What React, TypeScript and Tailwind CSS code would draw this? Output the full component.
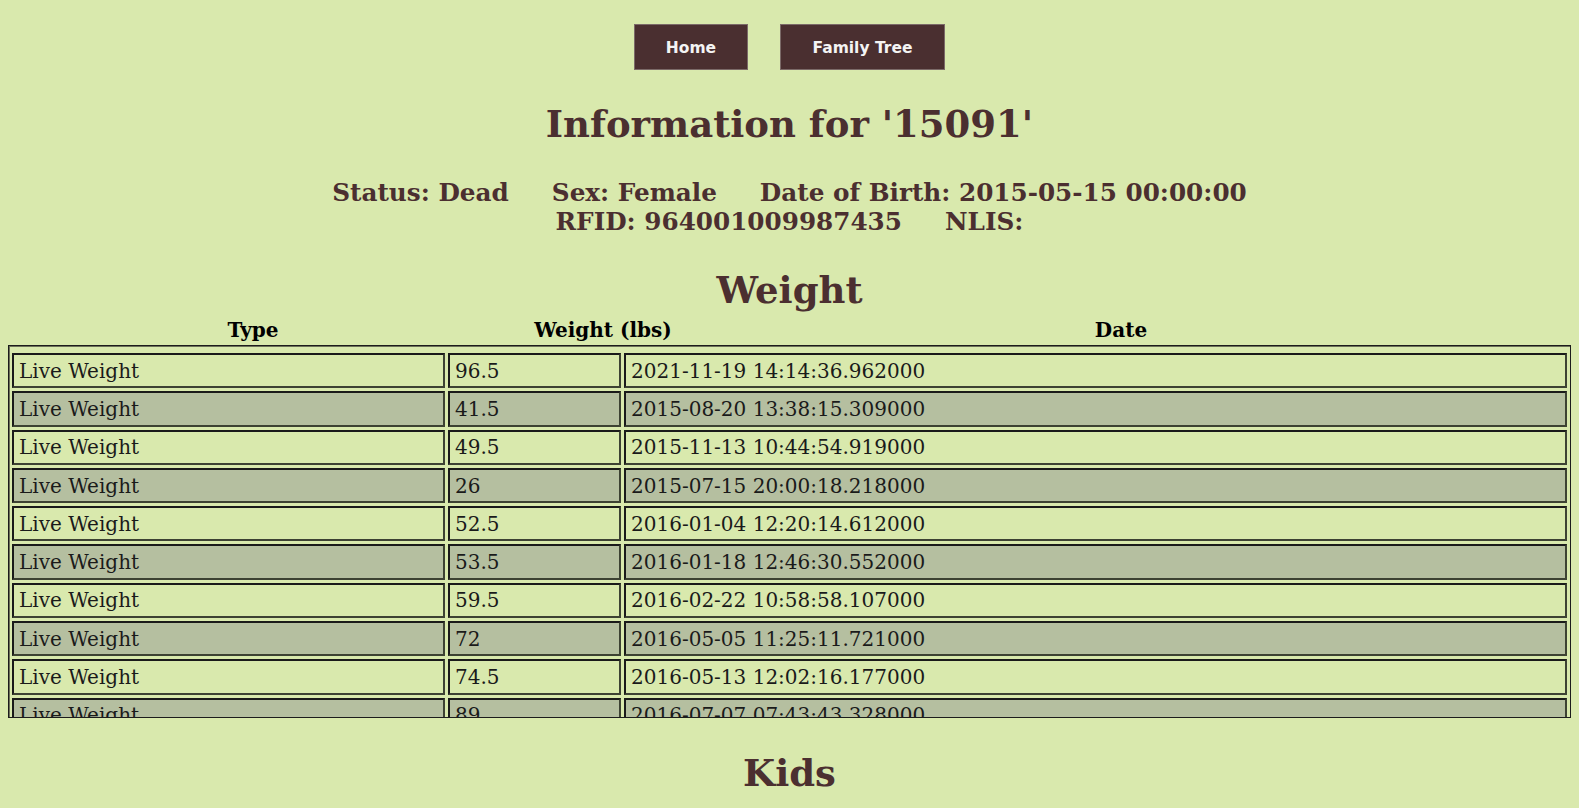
import React from "react";

const weights = [
  { type: "Live Weight", lbs: "96.5", date: "2021-11-19 14:14:36.962000" },
  { type: "Live Weight", lbs: "41.5", date: "2015-08-20 13:38:15.309000" },
  { type: "Live Weight", lbs: "49.5", date: "2015-11-13 10:44:54.919000" },
  { type: "Live Weight", lbs: "26", date: "2015-07-15 20:00:18.218000" },
  { type: "Live Weight", lbs: "52.5", date: "2016-01-04 12:20:14.612000" },
  { type: "Live Weight", lbs: "53.5", date: "2016-01-18 12:46:30.552000" },
  { type: "Live Weight", lbs: "59.5", date: "2016-02-22 10:58:58.107000" },
  { type: "Live Weight", lbs: "72", date: "2016-05-05 11:25:11.721000" },
  { type: "Live Weight", lbs: "74.5", date: "2016-05-13 12:02:16.177000" },
  { type: "Live Weight", lbs: "89", date: "2016-07-07 07:43:43.328000" },
  { type: "Live Weight", lbs: "92", date: "2016-08-11 09:12:05.441000" },
];

function NavButton({ label, width }: { label: string; width: string }) {
  return (
    <button
      className={`${width} h-[46px] pt-[3px] bg-[#4a2f30] border border-[#7b6a68] text-[#f4f4f4] text-[15.5px] font-bold font-['DejaVu_Sans',sans-serif]`}
    >
      {label}
    </button>
  );
}

export default function App() {
  return (
    <div className="min-h-[808px] bg-[#d9e9ad] font-['DejaVu_Serif',serif] text-[#4b2f30] pt-[24px]">
      {/* navigation */}
      <div className="flex justify-center gap-[32px]">
        <NavButton label="Home" width="w-[114px]" />
        <NavButton label="Family Tree" width="w-[165px]" />
      </div>

      <h1 className="mt-[33px] text-center text-[37px] leading-[42px] font-bold">
        Information for '15091'
      </h1>

      {/* summary */}
      <div className="mt-[34px] text-[24.7px] leading-[28.5px] font-bold">
        <div className="flex justify-center gap-[43px]">
          <span>Status: Dead</span>
          <span>Sex: Female</span>
          <span>Date of Birth: 2015-05-15 00:00:00</span>
        </div>
        <div className="flex justify-center gap-[43px]">
          <span>RFID: 964001009987435</span>
          <span>NLIS:</span>
        </div>
      </div>

      <h2 className="mt-[33px] text-center text-[37px] leading-[42px] font-bold">Weight</h2>

      {/* weight table */}
      <div className="mx-[8px] mt-[7px] flex h-[24px] items-center text-[20px] font-bold text-black">
        <div className="w-[490px] text-center">Type</div>
        <div className="w-[210px] text-center">Weight (lbs)</div>
        <div className="w-[826px] text-center">Date</div>
      </div>
      <div className="mx-[8px] mt-[3px] h-[373px] overflow-hidden border border-[#1c1c1c] shadow-[inset_1px_1px_0_#6b7058] px-[3px] pt-[7px]">
        <div className="flex flex-col gap-[3px]">
          {weights.map((w, i) => (
            <div key={i} className="flex gap-[3px] text-[20px] leading-[24px] text-[#1a1a1a]">
              {[w.type, w.lbs, w.date].map((v, j) => (
                <div
                  key={j}
                  className={`h-[35.3px] flex items-center pl-[5px] border-2 border-t-[#1a1a1a] border-l-[#1a1a1a] border-r-[#3d4233] border-b-[#3d4233] ${
                    i % 2 === 1 ? "bg-[#b5bfa0]" : "bg-[#d9e9ad]"
                  } ${j === 0 ? "w-[433px]" : j === 1 ? "w-[173px]" : "flex-1"}`}
                >
                  {v}
                </div>
              ))}
            </div>
          ))}
        </div>
      </div>

      <h2 className="mt-[34px] text-center text-[37px] leading-[42px] font-bold">Kids</h2>
    </div>
  );
}
